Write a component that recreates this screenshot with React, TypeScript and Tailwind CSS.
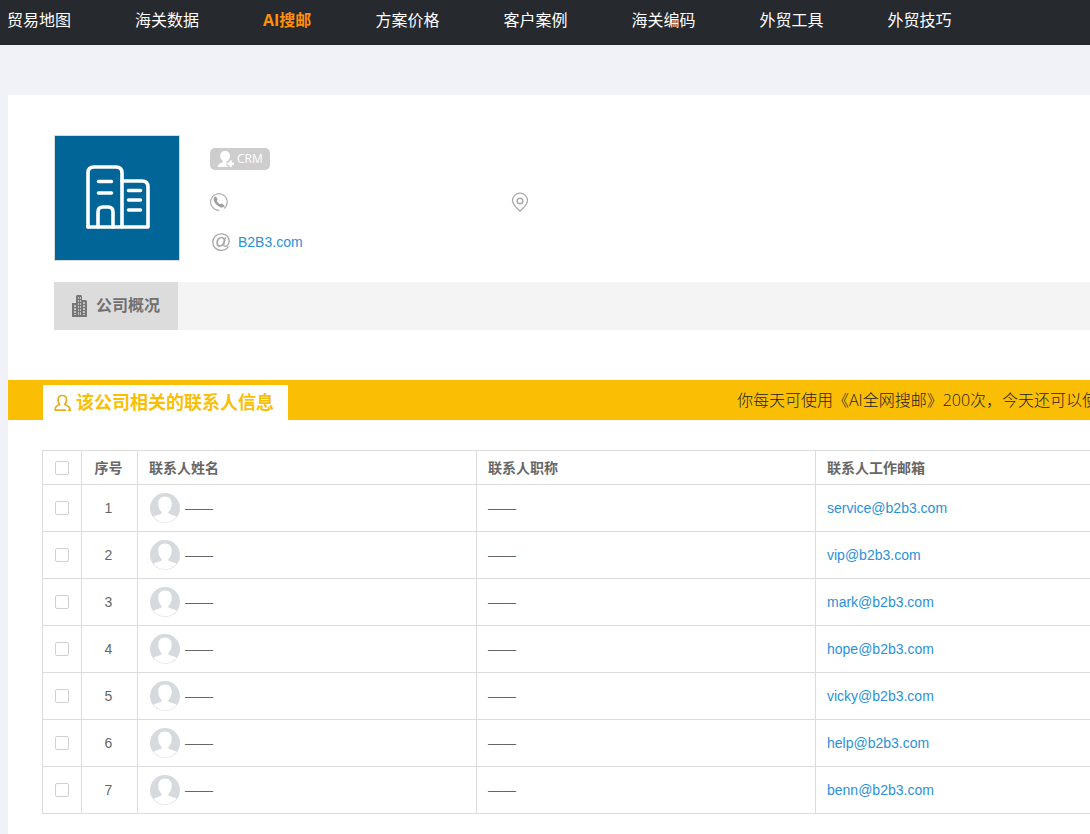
import React from "react";

const NAV_ITEMS = [
  "贸易地图",
  "海关数据",
  "AI搜邮",
  "方案价格",
  "客户案例",
  "海关编码",
  "外贸工具",
  "外贸技巧",
];
const ACTIVE_NAV = "AI搜邮";

const EMAILS = [
  "service@b2b3.com",
  "vip@b2b3.com",
  "mark@b2b3.com",
  "hope@b2b3.com",
  "vicky@b2b3.com",
  "help@b2b3.com",
  "benn@b2b3.com",
];

function CompanyLogo() {
  return (
    <svg
      viewBox="0 0 124 124"
      className="size-full"
      fill="none"
      stroke="#fff"
      strokeWidth="3.600"
      strokeLinecap="round"
      strokeLinejoin="round"
      aria-hidden="true"
    >
      <path d="M33 91V37q0-6 6-6h22q6 0 6 6v54" />
      <path d="M67 45h20q6 0 6 6v40H33" />
      <path d="M43 91V76q0-5 5-5h5q5 0 5 5v15" />
      <path d="M43.500 45.500h13M43.500 57h13M73.500 54.500h12M73.500 64h12M73.500 74h12" />
    </svg>
  );
}

function CrmIcon() {
  return (
    <svg viewBox="0 0 18 18" className="size-[18px]" fill="#fff" aria-hidden="true">
      <path d="M8 1c2.900 0 5 2 5 5 0 2-.9 3.700-2.200 4.800v1.500c.6.300 1 .5 1.400.8V17H.8c0-2.300 1.200-3.500 5-4.700v-1.500C4.200 9.700 3.200 8 3.200 6c0-3 2-5 4.800-5Z" />
      <path d="M13.500 9.500v8M9.500 13.500h8" stroke="#cdcdcd" strokeWidth="5" />
      <path d="M13.700 10.500v6.500M10.500 13.700h6.500" stroke="#fff" strokeWidth="2.400" />
    </svg>
  );
}

function PhoneIcon() {
  return (
    <svg viewBox="0 0 18 18" className="size-[18px]" fill="none" aria-hidden="true">
      <path d="M9.300 17.300A8.300 8.300 0 1 1 14 15.600" stroke="#b0b0b0" strokeWidth="1.200" />
      <path
        d="M4.700 3.800c.7-.5 1.200-.4 1.600.2l1.100 1.800c.3.600.2 1-.5 1.700-.2.900 2.500 3.700 3.600 3.600.7-.7 1.100-.8 1.700-.4l1.700 1.200c.6.500.6.900.1 1.500-1 1.200-2.500 1.300-4.200.5-2.400-1.100-4.500-3.200-5.600-5.500-.8-1.800-.7-3.500.5-4.600Z"
        fill="#a0a0a0"
      />
    </svg>
  );
}

function PinIcon() {
  return (
    <svg
      viewBox="0 0 18 20"
      className="h-5 w-[18px]"
      fill="none"
      stroke="#aaa"
      strokeWidth="1.300"
      aria-hidden="true"
    >
      <path d="M9 19.300C5 15 1.500 12.300 1.500 8.700a7.500 7.500 0 0 1 15 0c0 3.600-3.500 6.300-7.500 10.600Z" />
      <circle cx="9" cy="9" r="2.800" strokeWidth="1.500" />
    </svg>
  );
}

function AtIcon() {
  return (
    <svg
      viewBox="0 0 18 18"
      className="size-[18px]"
      fill="none"
      stroke="#a8a8a8"
      strokeWidth="1.300"
      strokeLinecap="round"
      aria-hidden="true"
    >
      <path d="M16 13.800C14.600 16.200 12 17.300 9 17.300 4.200 17.300.8 13.800.8 9.200.8 4.300 4.400.8 9.300.8c4.600 0 7.900 3 7.900 7.200 0 3-1.900 5.300-4 5.300-1.300 0-1.700-.8-1.400-2.100l1.500-6.600" />
      <path
        d="M12.500 7.300C12.200 5.400 11.100 4.500 9.600 4.500c-2.500 0-4.500 2.500-4.500 5.300 0 2 1 3.400 2.600 3.400 2.200 0 3.900-2.200 4.500-4.800"
        strokeWidth="1.700"
      />
    </svg>
  );
}

function BuildingIcon() {
  return (
    <svg viewBox="0 0 15 22" className="h-[22px] w-[15px]" aria-hidden="true">
      <path d="M0 8h4V1l1-1h4l1 1v4h4l1 1v16H0Z" fill="#777" />
      <path
        d="M2 10h2v2H2zM2 13h2v2H2zM2 16h2v2H2zM2 19h2v1H2zM6 2h1v2H6zM8 2h1v2H8zM6 5h1v2H6zM8 5h1v2H8zM6 8h1v2H6zM8 8h1v2H8zM6 11h1v2H6zM8 11h1v2H8zM6 14h1v2H6zM8 14h1v2H8zM6 17h1v3H6zM8 17h1v3H8zM11 7h2v2h-2zM11 10h2v2h-2zM11 13h2v2h-2zM11 16h2v2h-2zM11 19h2v1h-2z"
        fill="#c0c0c0"
      />
    </svg>
  );
}

function ContactIcon() {
  return (
    <svg
      viewBox="0 0 18 18"
      className="size-[18px]"
      fill="none"
      stroke="#e6af1e"
      strokeWidth="1.700"
      strokeLinecap="round"
      strokeLinejoin="round"
      aria-hidden="true"
    >
      <path d="M11.500 16.200H1.300c-.6-2.700.8-4.300 4.400-5.700C4.500 9.300 4 8 4 6 4 3.200 5.600 1.500 8.200 1.500s4.300 1.700 4.300 4.500c0 2-.6 3.300-1.800 4.500 3.500 1.300 5.500 2.900 5.500 5.700h-1.500" />
    </svg>
  );
}

function Avatar() {
  return (
    <svg viewBox="0 0 30 30" className="size-[30px] shrink-0" aria-hidden="true">
      <circle cx="15" cy="15" r="15" fill="#d6d9dd" />
      <path
        d="M15 3.500c4.400 0 6.700 2.800 6.700 6.800 0 4-1 6.500-3.100 8.400-.5 1-.4 1.900.9 2.300l5.600 1.900c1 .4 1.300.8 1 1.400A14.200 14.200 0 0 1 15 29.400 14.200 14.200 0 0 1 3.900 24.300c-.3-.6 0-1 1-1.400l5.600-1.900c1.300-.4 1.400-1.300.9-2.300-2.100-1.900-3.100-4.400-3.100-8.400 0-4 2.300-6.800 6.700-6.800Z"
        fill="#fff"
      />
    </svg>
  );
}

function Tick({ label }: { label: string }) {
  return (
    <input
      type="checkbox"
      aria-label={label}
      className="mx-auto block size-[14px] appearance-none rounded-xs border border-[#d0d0d0] bg-white checked:bg-[#2a91d8]"
    />
  );
}

export default function App() {
  return (
    <div className="min-h-screen overflow-hidden bg-[#f1f2f7] font-['Liberation_Sans','Noto_Sans_CJK_SC',sans-serif] text-sm text-[#666]">
      <header className="h-[45px] bg-[#26292e]">
        <nav className="flex h-10 items-center gap-16 pl-[7px] font-['Open_Sans','Noto_Sans_CJK_SC',sans-serif] text-base whitespace-nowrap">
          {NAV_ITEMS.map((item) => (
            <a
              key={item}
              href="#"
              className={item === ACTIVE_NAV ? "font-bold text-[#ff9009]" : "text-white"}
            >
              {item}
            </a>
          ))}
        </nav>
      </header>

      <main className="mt-[50px] ml-2 bg-white pb-5">
        <section className="flex gap-[30px] pt-10 pl-[46px]">
          <div className="size-[126px] shrink-0 border border-[#d5dce0] bg-[#026598]">
            <CompanyLogo />
          </div>
          <div className="flex grow flex-col items-start pt-[13px]">
            <button
              type="button"
              className="flex h-[22px] w-15 items-center gap-0.5 rounded-[5px] bg-[#cdcdcd] pl-[7px] font-['Open_Sans',sans-serif] text-xs text-white"
            >
              <CrmIcon />
              CRM
            </button>
            <div className="mt-[22px] flex h-5 items-center">
              <span className="w-[301px]">
                <PhoneIcon />
              </span>
              <PinIcon />
            </div>
            <div className="mt-5 ml-0.5 flex h-5 items-center gap-2">
              <AtIcon />
              <a href="#" className="text-[#2a91d8]">
                B2B3.com
              </a>
            </div>
          </div>
        </section>

        <div className="mt-[21px] ml-[46px] flex bg-[#f4f4f4]">
          <button
            type="button"
            className="flex h-12 w-[124px] items-center justify-center gap-[9px] bg-[#dcdcdc] text-base font-bold text-[#707070]"
          >
            <BuildingIcon />
            公司概况
          </button>
        </div>

        <div className="mt-[50px] flex h-10 items-end justify-between bg-[#fabe05] pl-[35px]">
          <h2 className="flex h-[35px] w-[245px] shrink-0 items-center gap-1 bg-white pl-[11px] text-lg font-bold whitespace-nowrap text-[#fabe05]">
            <ContactIcon />
            该公司相关的联系人信息
          </h2>
          <p className="w-[353px] self-center overflow-hidden font-['Open_Sans','Noto_Sans_CJK_SC',sans-serif] text-base font-light whitespace-nowrap text-[#222]">
            你每天可使用《AI全网搜邮》200次，今天还可以使
          </p>
        </div>

        <div className="mt-[30px] pl-[34px]">
          <table className="w-full table-fixed border-collapse border border-r-0 border-[#dcdcdc]">
            <colgroup>
              <col className="w-[39px]" />
              <col className="w-14" />
              <col className="w-[339px]" />
              <col className="w-[339px]" />
              <col />
            </colgroup>
            <thead>
              <tr className="h-[34px] border-b border-[#dcdcdc] text-left">
                <th className="border-r border-[#dcdcdc]">
                  <Tick label="全选" />
                </th>
                <th className="border-r border-[#dcdcdc] pr-0.5 text-center">序号</th>
                <th className="border-r border-[#dcdcdc] pl-[11px]">联系人姓名</th>
                <th className="border-r border-[#dcdcdc] pl-[11px]">联系人职称</th>
                <th className="pl-[11px]">联系人工作邮箱</th>
              </tr>
            </thead>
            <tbody>
              {EMAILS.map((email, index) => (
                <tr key={email} className="h-[47px] border-b border-[#dcdcdc]">
                  <td className="border-r border-[#dcdcdc]">
                    <Tick label={`选择 ${index + 1}`} />
                  </td>
                  <td className="border-r border-[#dcdcdc] pr-0.5 text-center">{index + 1}</td>
                  <td className="border-r border-[#dcdcdc] pl-3">
                    <div className="flex items-center gap-[5px]">
                      <Avatar />
                      ——
                    </div>
                  </td>
                  <td className="border-r border-[#dcdcdc] pl-[11px]">——</td>
                  <td className="pl-[11px]">
                    <a href="#" className="text-[#2a91d8]">
                      {email}
                    </a>
                  </td>
                </tr>
              ))}
            </tbody>
          </table>
        </div>
      </main>
    </div>
  );
}
